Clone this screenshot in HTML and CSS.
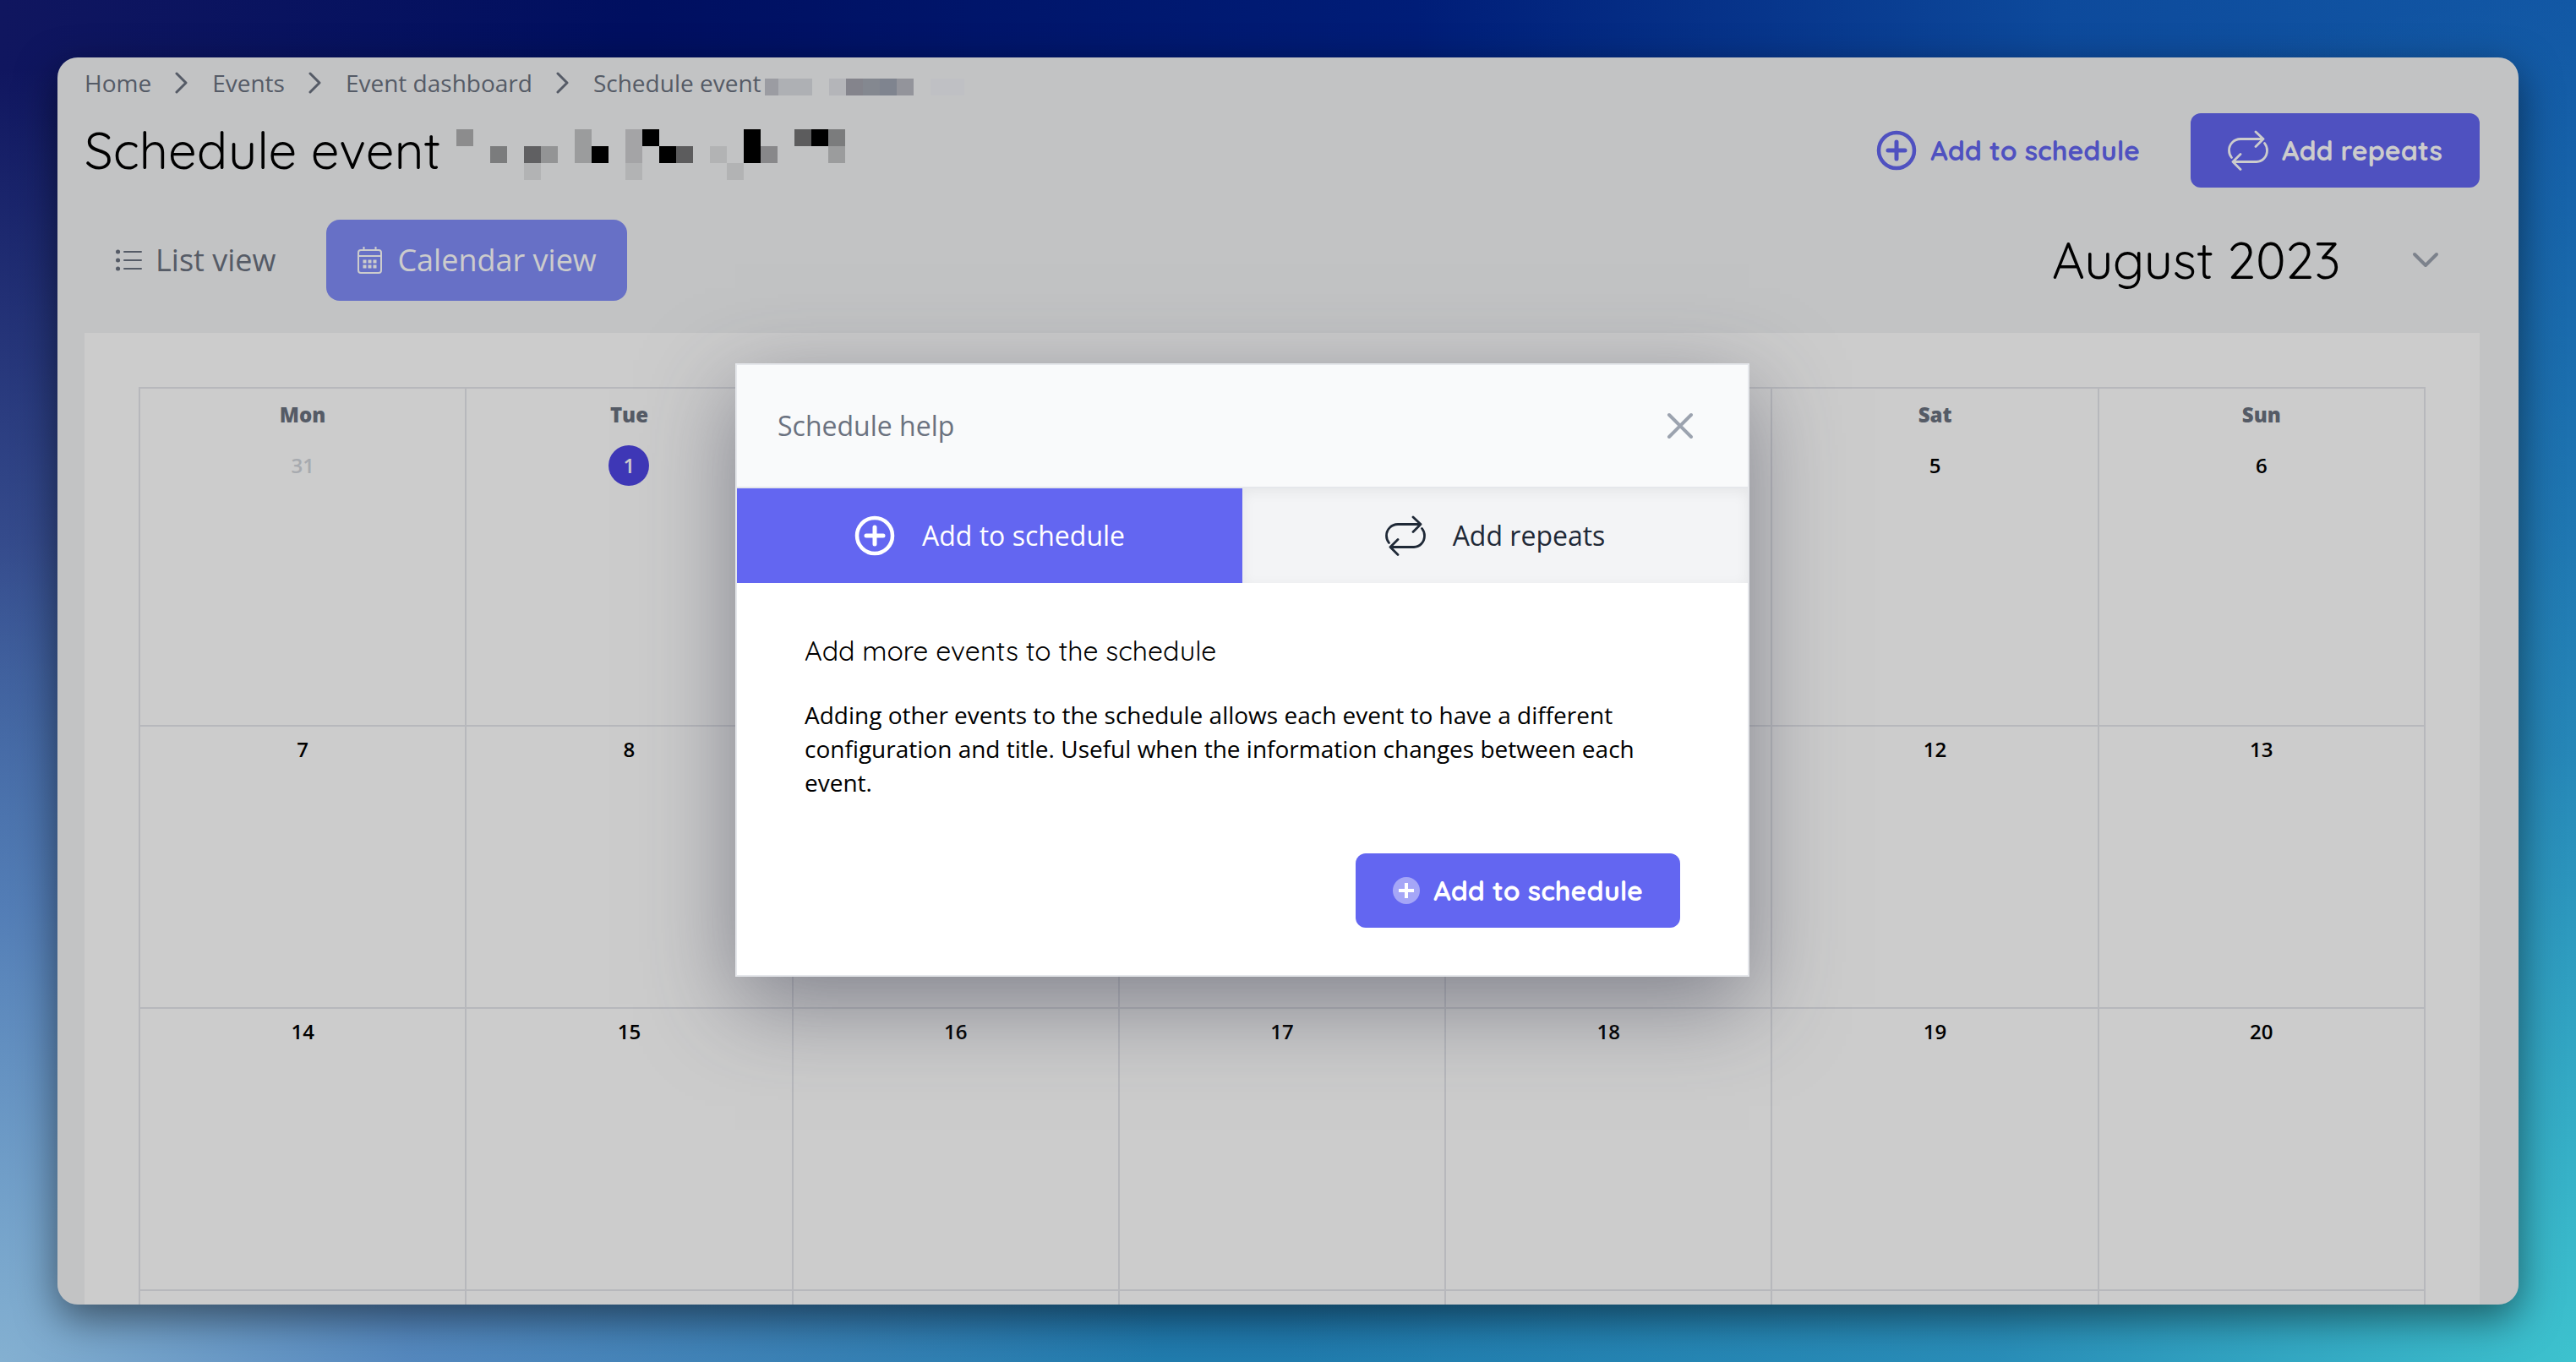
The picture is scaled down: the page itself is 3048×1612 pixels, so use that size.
FILE: index.html
```html
<!DOCTYPE html>
<html lang="en">
<head>
  <meta charset="UTF-8">
  <meta name="viewport" content="width=device-width, initial-scale=1.0">
  <title>Schedule event</title>
  <link rel="stylesheet" href="styles.css">
</head>
<body>
  <!-- Shared icons -->
  <svg class="icon-defs" aria-hidden="true">
    <symbol id="icon-plus" viewBox="0 0 48 48">
      <circle cx="24" cy="24" r="21" fill="none" stroke="currentColor" stroke-width="4.500"/>
      <path d="M24 14v20M14 24h20" fill="none" stroke="currentColor" stroke-width="5" stroke-linecap="round"/>
    </symbol>
    <symbol id="icon-repeat" viewBox="0 0 48 48">
      <path d="M33 2l9 8.500-9 9M42 10.500H15C7 10.500 1.500 17 1.500 24c0 3 1 6 3 8.500M15 28.500l-9 9 9 9M6 37.500h28c7 0 12.500-6 12.500-13.500 0-3-1-6-3-8.500" fill="none" stroke="currentColor" stroke-width="2.800" stroke-linecap="round" stroke-linejoin="round"/>
    </symbol>
    <symbol id="icon-chevron" viewBox="0 0 16 26">
      <path d="M2 2l11 11L2 24" fill="none" stroke="currentColor" stroke-width="3" stroke-linecap="round" stroke-linejoin="round"/>
    </symbol>
  </svg>

  <div class="window">
    <main class="page">
      <nav class="breadcrumbs" aria-label="Breadcrumb">
        <a href="#">Home</a>
        <svg class="separator"><use href="#icon-chevron"/></svg>
        <a href="#">Events</a>
        <svg class="separator"><use href="#icon-chevron"/></svg>
        <a href="#">Event dashboard</a>
        <svg class="separator"><use href="#icon-chevron"/></svg>
        <a href="#" class="current">Schedule event
          <svg class="redacted-small" viewBox="0 0 240 20" shape-rendering="crispEdges">
            <path fill="#c2c3cb" d="M0 0h16v20H0z"/>
            <path fill="#dadce1" d="M16 0h40v20H16z"/>
            <path fill="#e1e3e8" d="M76 0h20v20H76z"/>
            <path fill="#a5a6af" d="M96 0h20v20H96z"/>
            <path fill="#a5aab5" d="M116 0h20v20h-20z"/>
            <path fill="#9fa5b3" d="M136 0h20v20h-20z"/>
            <path fill="#b8b9c2" d="M156 0h20v20h-20z"/>
            <path fill="#eff0f6" d="M196 0h40v20h-40z"/>
          </svg>
        </a>
      </nav>

      <header class="page-header">
        <h1>Schedule event</h1>
        <svg class="redacted" viewBox="0 0 460 60" shape-rendering="crispEdges">
          <path fill="#afafb1" d="M0 0h20v20H0z"/>
          <path fill="#9a9b9d" d="M40 20h20v20H40zM440 0h20v20h-20z"/>
          <path fill="#78797b" d="M80 20h20v20H80z"/>
          <path fill="#b8b9bb" d="M100 20h20v20h-20z"/>
          <path fill="#c2c3c5" d="M140 0h20v40h-20zM440 20h20v20h-20z"/>
          <path fill="#cdced0" d="M200 0h20v40h-20z"/>
          <path fill="#737375" d="M260 20h20v20h-20zM400 0h20v20h-20z"/>
          <path fill="#dfe0e2" d="M80 40h20v20H80zM200 40h20v20h-20zM300 20h20v20h-20zM320 40h20v20h-20z"/>
          <path fill="#aaabad" d="M360 20h20v20h-20z"/>
          <path fill="#000" d="M160 20h20v20h-20zM220 0h20v20h-20zM240 20h20v20h-20zM340 0h20v40h-20zM420 0h20v20h-20z"/>
        </svg>
        <div class="actions">
          <button type="button" class="btn btn-plain"><svg class="icon"><use href="#icon-plus"/></svg>Add to schedule</button>
          <button type="button" class="btn btn-primary"><svg class="icon"><use href="#icon-repeat"/></svg>Add repeats</button>
        </div>
      </header>

      <div class="toolbar">
        <button type="button" class="view">
          <svg class="icon-sm" viewBox="0 0 32 32" fill="none" stroke="currentColor">
            <path d="M11 6h20M11 16h20M11 26h20" stroke-width="2" stroke-linecap="round"/>
            <path d="M3.500 6h.1M3.500 16h.1M3.500 26h.1" stroke-width="5" stroke-linecap="round"/>
          </svg>
          List view
        </button>
        <button type="button" class="view view-active">
          <svg class="icon-sm" viewBox="0 0 32 32" fill="none" stroke="currentColor" stroke-width="2">
            <rect x="2" y="4" width="27" height="27" rx="3"/>
            <path d="M2 11h27M8.500 0v4M22.500 0v4"/>
            <path d="M7.500 17.500h4M13.500 17.500h4M19.500 17.500h4M7.500 23.500h4M13.500 23.500h4M19.500 23.500h4" stroke-width="4"/>
          </svg>
          Calendar view
        </button>
        <label class="month">
          <select aria-label="Month">
            <option>August 2023</option>
          </select>
          <svg class="month-arrow" viewBox="0 0 32 20"><path d="M3 3l13 13L29 3" fill="none" stroke="currentColor" stroke-width="4" stroke-linecap="round" stroke-linejoin="round"/></svg>
        </label>
      </div>

      <section class="card">
        <table class="calendar">
          <tbody>
            <tr class="first">
              <td><b>Mon</b><span class="day muted">31</span></td>
              <td><b>Tue</b><span class="day today">1</span></td>
              <td><b>Wed</b><span class="day">2</span></td>
              <td><b>Thu</b><span class="day">3</span></td>
              <td><b>Fri</b><span class="day">4</span></td>
              <td><b>Sat</b><span class="day">5</span></td>
              <td><b>Sun</b><span class="day">6</span></td>
            </tr>
            <tr>
              <td><span class="day">7</span></td>
              <td><span class="day">8</span></td>
              <td><span class="day">9</span></td>
              <td><span class="day">10</span></td>
              <td><span class="day">11</span></td>
              <td><span class="day">12</span></td>
              <td><span class="day">13</span></td>
            </tr>
            <tr>
              <td><span class="day">14</span></td>
              <td><span class="day">15</span></td>
              <td><span class="day">16</span></td>
              <td><span class="day">17</span></td>
              <td><span class="day">18</span></td>
              <td><span class="day">19</span></td>
              <td><span class="day">20</span></td>
            </tr>
            <tr>
              <td></td><td></td><td></td><td></td><td></td><td></td><td></td>
            </tr>
          </tbody>
        </table>
      </section>
    </main>

    <!-- Help modal -->
    <div class="overlay">
      <div class="modal" role="dialog" aria-labelledby="modal-title">
        <div class="modal-header">
          <h2 id="modal-title">Schedule help</h2>
          <button type="button" class="close-btn" aria-label="Close">
            <svg viewBox="0 0 32 32"><path d="M3 3l26 26M29 3L3 29" fill="none" stroke="currentColor" stroke-width="4" stroke-linecap="round"/></svg>
          </button>
        </div>
        <div class="tabs">
          <button type="button" class="tab tab-active"><svg class="icon"><use href="#icon-plus"/></svg>Add to schedule</button>
          <button type="button" class="tab"><svg class="icon"><use href="#icon-repeat"/></svg>Add repeats</button>
        </div>
        <div class="modal-body">
          <h3>Add more events to the schedule</h3>
          <p>Adding other events to the schedule allows each event to have a different configuration and title. Useful when the information changes between each event.</p>
          <button type="button" class="btn btn-primary">
            <svg class="icon-sm" viewBox="0 0 32 32">
              <circle cx="16" cy="16" r="16" fill="#a5a6f7"/>
              <path d="M16 7v18M7 16h18" stroke="#fff" stroke-width="4"/>
            </svg>
            Add to schedule
          </button>
        </div>
      </div>
    </div>
  </div>
</body>
</html>
```
FILE: styles.css
```css
* {
  box-sizing: border-box;
}

body {
  margin: 0;
  height: 100vh;
  padding: 68px;
  font-family: "Open Sans", sans-serif;
  font-size: 28px;
  line-height: 40px;
  color: #000;
  background:
    radial-gradient(ellipse 45% 95% at 0% 100%, #84b0d1 0%, rgba(98, 140, 195, 0.8) 35%, rgba(60, 90, 160, 0) 100%),
    radial-gradient(ellipse 50% 100% at 100% 100%, #3dc2ce 0%, rgba(45, 150, 190, 0.7) 45%, rgba(30, 110, 180, 0) 100%),
    linear-gradient(to bottom, rgba(30, 125, 175, 0) 40%, #217cae 100%),
    linear-gradient(to right, #10165f 0%, #000f60 25%, #001d78 55%, #0d4a9c 80%, #1258a5 100%);
}

button, select {
  font: inherit;
  color: inherit;
  border: none;
  background: none;
  cursor: pointer;
}

h1, h2, h3, p {
  margin: 0;
}

svg {
  flex: none;
}

.icon-defs {
  display: none;
}

.icon {
  width: 48px;
  height: 48px;
}

.icon-sm {
  width: 32px;
  height: 32px;
}

.window {
  position: relative;
  height: 100%;
  overflow: hidden;
  border-radius: 24px;
  background-color: #f3f4f6;
  box-shadow: 0 16px 48px rgba(0, 0, 0, 0.5);
}

.page {
  padding: 10px 46px 0 32px;
}

/* Breadcrumbs */
.breadcrumbs {
  display: flex;
  align-items: center;
  gap: 28px;
  color: #6b7280;
}

.breadcrumbs a {
  color: inherit;
  text-decoration: none;
}

.breadcrumbs .current {
  display: flex;
  align-items: center;
  gap: 4px;
}

.separator {
  width: 16px;
  height: 26px;
}

.redacted-small {
  width: 240px;
  height: 20px;
  margin-top: 10px;
}

/* Title row */
.page-header {
  display: flex;
  align-items: center;
  margin-top: 16px;
}

h1, h3, .month, .btn {
  font-family: Quicksand, Lato, sans-serif;
}

h1 {
  font-size: 60px;
  line-height: 72px;
  font-weight: 400;
}

.redacted {
  width: 460px;
  height: 60px;
  margin: 10px 0 0 18px;
}

.actions {
  display: flex;
  gap: 16px;
  margin-left: auto;
}

.btn {
  display: flex;
  align-items: center;
  gap: 16px;
  height: 88px;
  padding: 0 44px;
  border-radius: 12px;
  font-size: 32px;
  font-weight: 700;
}

.btn-plain {
  color: #6366f1;
}

.btn-primary {
  background-color: #6366f1;
  color: #fff;
}

/* View switch and month */
.toolbar {
  display: flex;
  align-items: center;
  gap: 24px;
  margin: 38px 0;
}

.view {
  display: flex;
  align-items: center;
  gap: 16px;
  height: 96px;
  padding: 0 36px;
  border-radius: 16px;
  font-size: 36px;
  color: #6b7280;
}

.view-active {
  background-color: #818cf8;
  color: #fff;
}

.month {
  display: flex;
  align-items: center;
  gap: 84px;
  margin-left: auto;
  padding-right: 48px;
  font-size: 60px;
  line-height: 72px;
}

.month select {
  appearance: none;
  padding: 0;
}

.month-arrow {
  width: 32px;
  height: 20px;
  color: #9ca3af;
}

/* Calendar */
.card {
  padding: 64px;
  background-color: #fff;
}

.calendar {
  width: 100%;
  table-layout: fixed;
  border-collapse: collapse;
}

.calendar td {
  height: 334px;
  padding: 3px 0;
  border: 2px solid #e5e7eb;
  vertical-align: top;
  text-align: center;
  font-size: 24px;
}

.calendar .first td {
  height: 400px;
}

.calendar b {
  display: block;
  margin-bottom: 8px;
  line-height: 56px;
  font-weight: 800;
  color: #6b7280;
}

.day {
  display: block;
  width: 48px;
  margin: 0 auto;
  line-height: 48px;
  font-weight: 600;
}

.muted {
  color: #d1d5db;
}

.today {
  border-radius: 50%;
  background-color: #4f46e5;
  color: #fff;
}

/* Modal */
.overlay {
  position: absolute;
  inset: 0;
  display: flex;
  justify-content: center;
  align-items: flex-start;
  padding: 362px 108px 0 0;
  background-color: rgba(0, 0, 0, 0.2);
}

.modal {
  width: 1200px;
  border: 2px solid #e5e7eb;
  background-color: #fff;
  box-shadow: 0 32px 100px rgba(55, 58, 78, 0.5);
}

.modal-header {
  display: flex;
  justify-content: space-between;
  align-items: center;
  height: 146px;
  padding: 0 64px 0 48px;
  border-bottom: 2px solid #e5e7eb;
  background-color: #f9fafb;
}

.modal-header h2 {
  font-size: 32px;
  font-weight: 400;
  color: #6b7280;
}

.close-btn {
  display: flex;
  padding: 0;
  color: #9ca3af;
}

.close-btn svg {
  width: 32px;
  height: 32px;
}

.tabs {
  display: flex;
}

.tab {
  flex: 1;
  display: flex;
  justify-content: center;
  align-items: center;
  gap: 32px;
  height: 112px;
  font-size: 32px;
  color: #1f2937;
  background-color: #f3f4f6;
  box-shadow: inset 0 4px 16px rgba(0, 0, 0, 0.06);
}

.tab-active {
  color: #fff;
  background-color: #6366f1;
  box-shadow: none;
}

.modal-body {
  padding: 56px 80px;
}

.modal-body h3 {
  margin-bottom: 32px;
  font-size: 32px;
  line-height: 48px;
  font-weight: 400;
}

.modal-body .btn {
  margin: 64px 0 0 auto;
}
```
